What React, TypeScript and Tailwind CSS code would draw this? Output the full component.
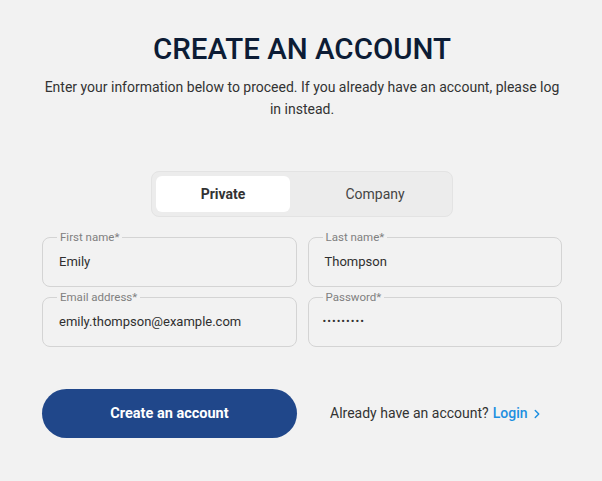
import { ChevronRight } from "lucide-react";

function Field({ label, value, dots }: { label: string; value: string; dots?: boolean }) {
  return (
    <fieldset className="rounded-lg border border-[#d4d4d4] pl-[14px] pr-[14px] pb-[14px] pt-[7px]">
      <legend className="px-[3px] text-[11.5px] leading-4 text-[#808080]">{label}</legend>
      <div
        className={
          dots
            ? "h-5 text-[11px] leading-5 tracking-[1px] text-[#333]"
            : "h-5 pl-[2px] text-[13px] leading-5 text-[#2f2f2f]"
        }
      >
        {value}
      </div>
    </fieldset>
  );
}

export default function App() {
  return (
    <div
      className="min-h-screen w-full bg-[#f2f2f2] pl-[42px] pr-[40px] pt-[31px]"
      style={{ fontFamily: "Roboto, 'Liberation Sans', sans-serif" }}
    >
      <h1 className="text-center text-[29.5px] font-medium leading-9 text-[#0c1c35]">
        CREATE AN ACCOUNT
      </h1>
      <p className="mt-[9px] text-center text-[14px] leading-[22px] text-[#333]">
        Enter your information below to proceed. If you already have an account, please log in instead.
      </p>

      <div className="mt-[51px] flex justify-center">
        <div className="flex h-[46px] w-[302px] rounded-lg border border-[#e3e3e3] bg-[#ececec] p-[4px]">
          <div className="flex w-[134px] items-center justify-center rounded-md bg-white text-[14px] font-bold text-[#333]">
            Private
          </div>
          <div className="ml-[12px] flex flex-1 items-center justify-center text-[14px] text-[#444]">
            Company
          </div>
        </div>
      </div>

      <div className="mt-[12px] grid grid-cols-2 gap-x-[11px] gap-y-[2px]">
        <Field label="First name*" value="Emily" />
        <Field label="Last name*" value="Thompson" />
        <Field label="Email address*" value="emily.thompson@example.com" />
        <Field label="Password*" value="•••••••••" dots />
      </div>

      <div className="mt-[42px] flex items-center">
        <button className="h-[49px] w-[255px] rounded-full bg-[#20478a] text-[14.5px] font-bold text-white">
          Create an account
        </button>
        <div className="ml-[33px] flex items-center text-[14px] text-[#333]">
          Already have an account?
          <span className="ml-[4px] font-medium text-[#1d8fe0]">Login</span>
          <ChevronRight className="ml-[2px] h-[14px] w-[14px] text-[#1d8fe0]" strokeWidth={2.5} />
        </div>
      </div>
    </div>
  );
}
